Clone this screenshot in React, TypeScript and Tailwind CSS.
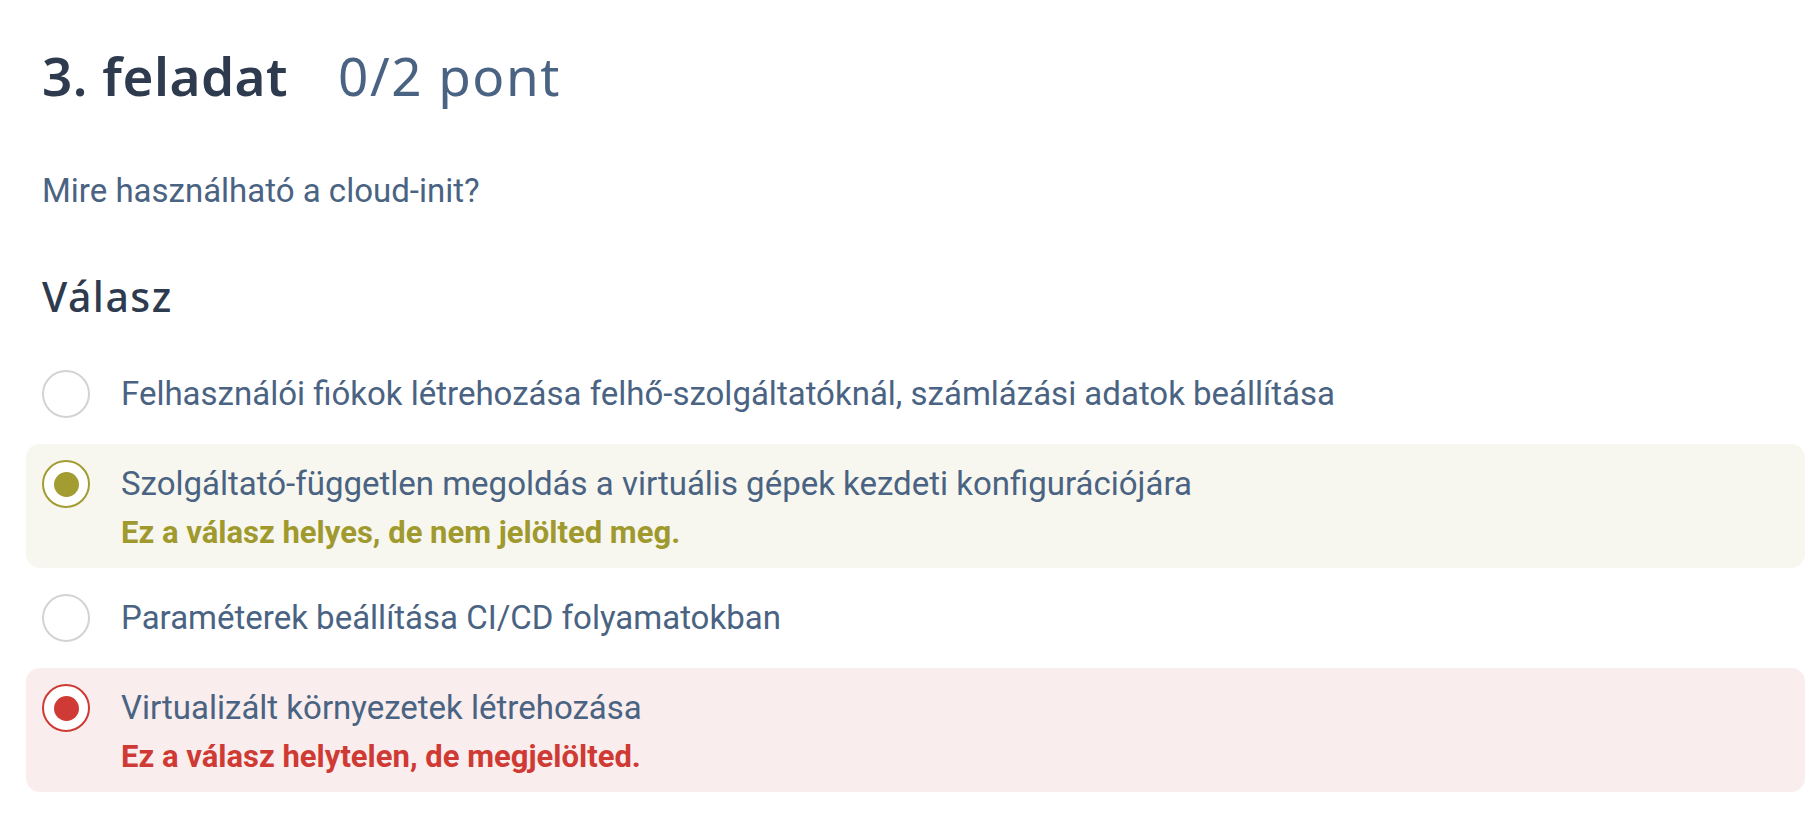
import React from 'react';

type Option = {
  text: string;
  state: 'none' | 'missed' | 'wrong';
};

const options: Option[] = [
  { text: 'Felhasználói fiókok létrehozása felhő-szolgáltatóknál, számlázási adatok beállítása', state: 'none' },
  { text: 'Szolgáltató-független megoldás a virtuális gépek kezdeti konfigurációjára', state: 'missed' },
  { text: 'Paraméterek beállítása CI/CD folyamatokban', state: 'none' },
  { text: 'Virtualizált környezetek létrehozása', state: 'wrong' },
];

function Radio({ state }: { state: Option['state'] }) {
  if (state === 'none') {
    return <div className="w-[48px] h-[48px] shrink-0 rounded-full border-2 border-[#d3d3d3] bg-white" />;
  }
  const ring = state === 'missed' ? 'border-[#a29c31]' : 'border-[#cf3a34]';
  const dot = state === 'missed' ? 'bg-[#a29c31]' : 'bg-[#cf3a34]';
  return (
    <div className={`w-[48px] h-[48px] shrink-0 rounded-full border-2 ${ring} bg-white flex items-center justify-center`}>
      <div className={`w-[25px] h-[25px] rounded-full ${dot}`} />
    </div>
  );
}

function AnswerRow({ option }: { option: Option }) {
  const box =
    option.state === 'missed'
      ? 'bg-[#f7f7f0]'
      : option.state === 'wrong'
      ? 'bg-[#f9eeed]'
      : '';

  return (
    <div className={`-mx-4 p-4 rounded-[14px] flex items-start gap-[31px] ${box}`}>
      <Radio state={option.state} />
      <div className="flex flex-col">
        <span className="text-[33px] leading-[48px] text-[#4a6382]">{option.text}</span>
        {option.state === 'missed' && (
          <span className="mt-[6px] text-[31px] leading-[38px] font-bold text-[#a09a2e]">
            Ez a válasz helyes, de nem jelölted meg.
          </span>
        )}
        {option.state === 'wrong' && (
          <span className="mt-[6px] text-[31px] leading-[38px] font-bold text-[#cf3a34]">
            Ez a válasz helytelen, de megjelölted.
          </span>
        )}
      </div>
    </div>
  );
}

export default function App() {
  return (
    <div className="min-h-screen bg-white pl-[42px] pr-[25px] pt-[44px] font-['Roboto',sans-serif]">
      {/* Fejléc */}
      <h1 className="flex items-baseline gap-[50px] font-['Noto_Sans',sans-serif] text-[53px] leading-[64px]">
        <span className="font-semibold text-[#2e3a4e] tracking-[0.5px]">3. feladat</span>
        <span className="font-normal text-[#4a6382] tracking-[1.5px]">0/2 pont</span>
      </h1>

      {/* Kérdés */}
      <p className="mt-[59px] text-[33px] leading-[48px] text-[#4a6382]">Mire használható a cloud-init?</p>

      <h2 className="mt-[57px] font-['Noto_Sans',sans-serif] font-medium text-[41px] leading-[48px] tracking-[1.5px] text-[#2e3a4e]">
        Válasz
      </h2>

      {/* Válaszok */}
      <div className="mt-[34px] flex flex-col gap-[10px]">
        {options.map((o) => (
          <AnswerRow key={o.text} option={o} />
        ))}
      </div>
    </div>
  );
}
